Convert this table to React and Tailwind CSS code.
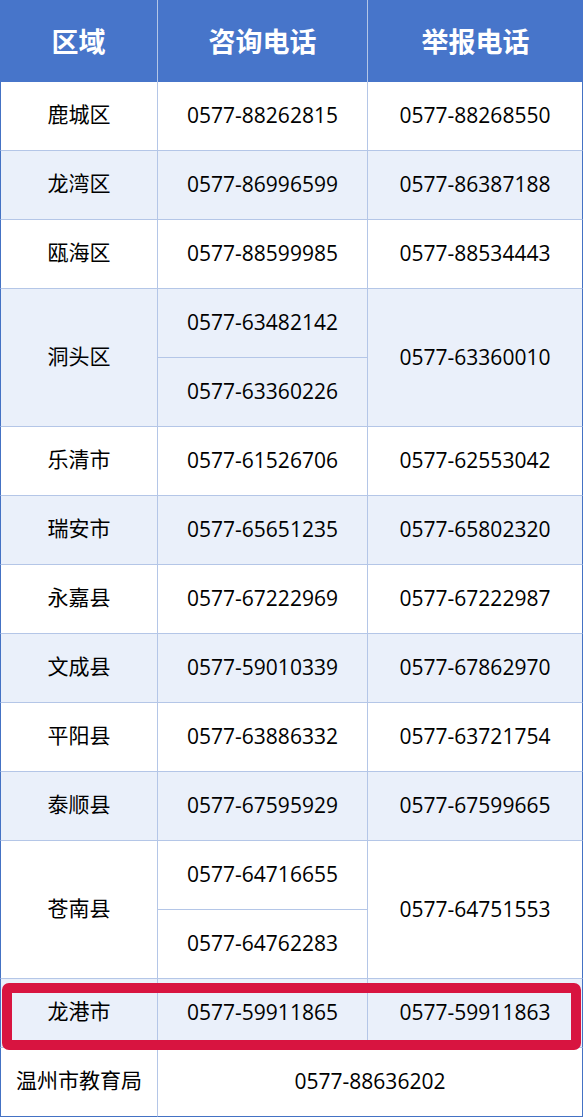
import React from "react";

const font = { fontFamily: '"Open Sans", "Noto Sans CJK SC", sans-serif' };
const cjk = { fontFamily: '"Noto Sans CJK SC", sans-serif' };

const rows = [
  { area: "鹿城区", c: ["0577-88262815"], r: "0577-88268550" },
  { area: "龙湾区", c: ["0577-86996599"], r: "0577-86387188" },
  { area: "瓯海区", c: ["0577-88599985"], r: "0577-88534443" },
  { area: "洞头区", c: ["0577-63482142", "0577-63360226"], r: "0577-63360010" },
  { area: "乐清市", c: ["0577-61526706"], r: "0577-62553042" },
  { area: "瑞安市", c: ["0577-65651235"], r: "0577-65802320" },
  { area: "永嘉县", c: ["0577-67222969"], r: "0577-67222987" },
  { area: "文成县", c: ["0577-59010339"], r: "0577-67862970" },
  { area: "平阳县", c: ["0577-63886332"], r: "0577-63721754" },
  { area: "泰顺县", c: ["0577-67595929"], r: "0577-67599665" },
  { area: "苍南县", c: ["0577-64716655", "0577-64762283"], r: "0577-64751553" },
  { area: "龙港市", c: ["0577-59911865"], r: "0577-59911863" },
];

const td = "h-[69px] p-0 border-b border-r border-[#b4c6e7] text-center align-middle text-[21px] text-black";
const th = "h-[82px] p-0 text-[27px] font-bold text-white text-center";

export default function App() {
  const body = [];
  rows.forEach((row, i) => {
    const bg = i % 2 === 1 ? "bg-[#eaf0fa]" : "bg-white";
    const span = row.c.length;
    body.push(
      <tr key={i + "a"} className={bg}>
        <td rowSpan={span} className={`${td} pb-[4px] border-l border-l-[#4472c4]`} style={cjk}>{row.area}</td>
        <td className={td}>{row.c[0]}</td>
        <td rowSpan={span} className={`${td} border-r-[#4472c4]`}>{row.r}</td>
      </tr>
    );
    if (span === 2) {
      body.push(
        <tr key={i + "b"} className={bg}>
          <td className={td}>{row.c[1]}</td>
        </tr>
      );
    }
  });
  body.push(
    <tr key="last" className="bg-white">
      <td className={`${td} pb-[4px] border-l border-l-[#4472c4] border-b-[#4472c4]`} style={cjk}>温州市教育局</td>
      <td colSpan={2} className={`${td} border-r-[#4472c4] border-b-[#4472c4]`}>0577-88636202</td>
    </tr>
  );

  return (
    <div className="relative w-[583px] bg-white" style={font}>
      <table className="w-[583px] table-fixed border-separate border-spacing-0">
        <colgroup>
          <col className="w-[158px]" />
          <col className="w-[210px]" />
          <col className="w-[215px]" />
        </colgroup>
        <thead>
          <tr className="bg-[#4775ca]" style={cjk}>
            <th className={`${th} border-r border-[#b4c6e7]`}>区域</th>
            <th className={`${th} border-r border-[#b4c6e7]`}>咨询电话</th>
            <th className={th}>举报电话</th>
          </tr>
        </thead>
        <tbody>{body}</tbody>
      </table>
      <div className="absolute left-[2px] top-[983px] w-[579px] h-[67px] border-[10px] border-[#d81440] rounded-[7px] pointer-events-none" />
    </div>
  );
}
